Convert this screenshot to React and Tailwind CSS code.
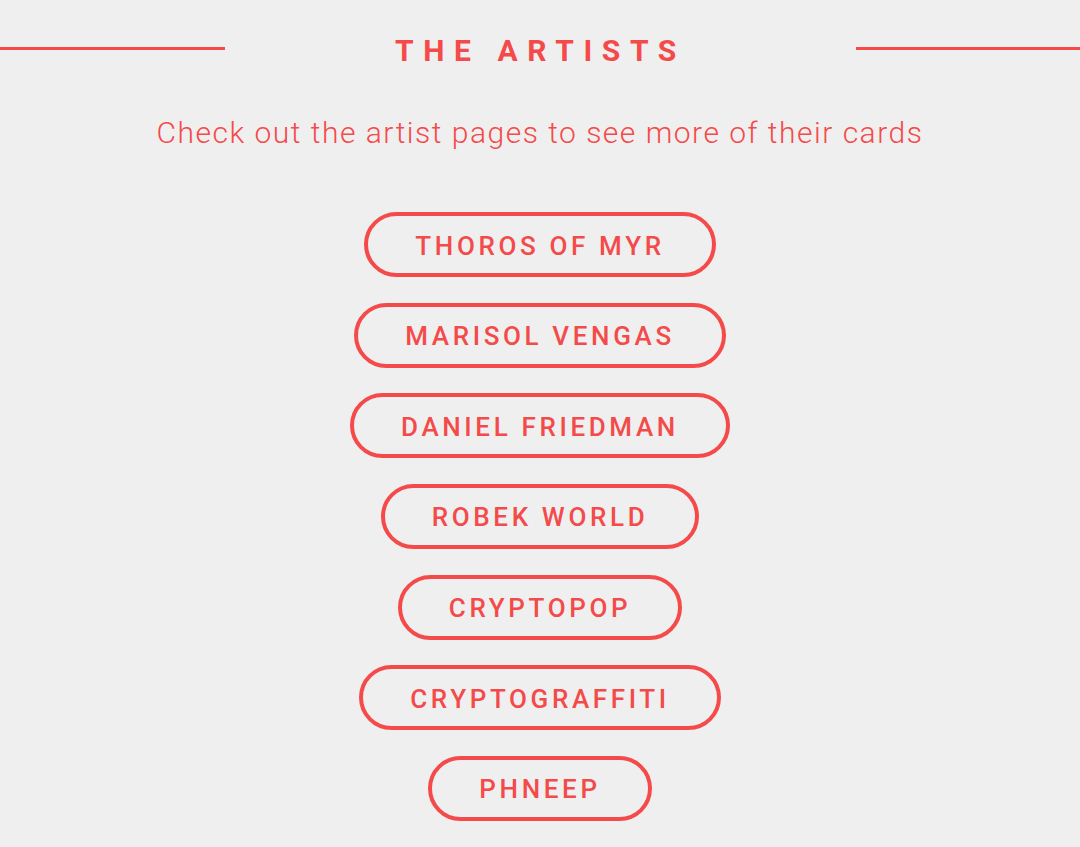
const artists = [
  "Thoros of Myr",
  "Marisol Vengas",
  "Daniel Friedman",
  "Robek World",
  "Cryptopop",
  "Cryptograffiti",
  "Phneep",
];

export default function App() {
  return (
    <div className="min-h-[847px] bg-[#efefef] font-['Roboto',sans-serif] text-[#f44a4a]">
      <section className="pt-[31px]">
        <div className="flex items-start justify-between">
          <div className="mt-[16px] h-[3px] w-[225px] bg-[#f44a4a]" />
          <h2 className="text-[30px] font-bold uppercase leading-[40px] tracking-[0.32em]">
            The Artists
          </h2>
          <div className="mt-[16px] h-[3px] w-[224px] bg-[#f44a4a]" />
        </div>

        <p className="mt-[42px] text-center text-[30px] font-light tracking-[0.05em] leading-[40px]">
          Check out the artist pages to see more of their cards
        </p>

        <ul className="mt-[59px] flex flex-col items-center gap-[25.67px]">
          {artists.map((name) => (
            <li key={name}>
              <a
                href="#"
                className="flex h-[65px] items-center rounded-full border-4 border-[#f44a4a] px-[47px] pt-[3px] text-[26px] font-medium uppercase tracking-[0.14em]"
              >
                {name}
              </a>
            </li>
          ))}
        </ul>
      </section>
    </div>
  );
}
